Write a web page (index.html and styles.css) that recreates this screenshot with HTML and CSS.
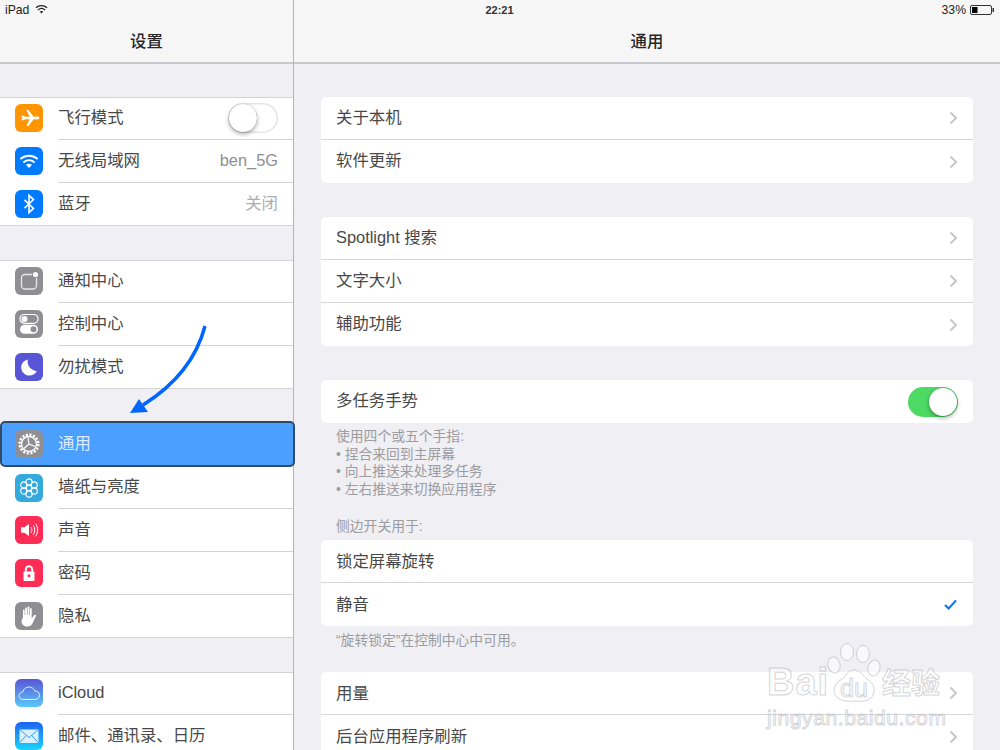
FILE: index.html
```html
<!DOCTYPE html>
<html lang="zh">
<head>
<meta charset="utf-8">
<title>设置</title>
<link rel="stylesheet" href="styles.css">
</head>
<body>
<div class="screen">
  <aside class="side">
    <header class="nav"><h1 class="title">设置</h1></header>
    <section class="group">
      <div class="row">
        <span class="ic orange"><svg viewBox="0 0 28 28"><path fill="#fff" d="M6 12.200l1.200-.6 3.400 1.200 4-.1-3.200-6.700h2l5.300 6.700 3.600-.1c1.300 0 2.200.7 2.200 1.400s-.9 1.400-2.200 1.400l-3.600-.1-5.300 6.700h-2l3.200-6.700-4-.1-3.400 1.200-1.200-.6 1.700-1.800z"/></svg></span>
        <span class="label">飞行模式</span>
        <span class="toggle"><span class="knob"></span></span>
      </div>
      <div class="row">
        <span class="ic blue"><svg viewBox="0 0 28 28"><g fill="none" stroke="#fff" stroke-width="2" stroke-linecap="round"><path d="M6 11.500c4.500-3.800 11.500-3.800 16 0"/><path d="M9 15c2.900-2.400 7.100-2.400 10 0"/></g><path fill="#fff" d="M14 21l-3-3.300c1.700-1.300 4.300-1.300 6 0z"/></svg></span>
        <span class="label">无线局域网</span>
        <span class="value">ben_5G</span>
      </div>
      <div class="row">
        <span class="ic blue"><svg viewBox="0 0 28 28"><path fill="none" stroke="#fff" stroke-width="1.600" d="M9.500 9.800l9 8.600-4.500 4.200V5.400l4.500 4.200-9 8.600"/></svg></span>
        <span class="label">蓝牙</span>
        <span class="value pale">关闭</span>
      </div>
    </section>
    <section class="group">
      <div class="row">
        <span class="ic gray"><svg viewBox="0 0 28 28"><rect x="6.500" y="7.500" width="15" height="14.500" rx="3.500" fill="none" stroke="#e9e9ec" stroke-width="1.300"/><circle cx="20.500" cy="7.500" r="3.400" fill="#8e8e93"/><circle cx="20.500" cy="7.500" r="2.600" fill="#fff"/></svg></span>
        <span class="label">通知中心</span>
      </div>
      <div class="row">
        <span class="ic gray"><svg viewBox="0 0 28 28"><rect x="5" y="4.500" width="18" height="8.800" rx="4.400" fill="#8e8e93" stroke="#fff" stroke-width="1.200"/><circle cx="9.500" cy="8.900" r="3" fill="#fff"/><rect x="5" y="14.800" width="18" height="9" rx="4.500" fill="#fff"/><circle cx="18.500" cy="19.300" r="3" fill="#8e8e93"/></svg></span>
        <span class="label">控制中心</span>
      </div>
      <div class="row">
        <span class="ic indigo"><svg viewBox="0 0 28 28"><path fill="#fff" d="M12.800 6.500c-1 5.200 1.800 10.300 9 11.800-1.400 2.600-4.100 4.200-7.300 4.200-4.600 0-8.300-3.700-8.300-8.300 0-3.500 2.600-6.700 6.600-7.700z"/></svg></span>
        <span class="label">勿扰模式</span>
      </div>
    </section>
    <section class="selected-wrap">
      <div class="row selected">
        <span class="ic gray"><svg viewBox="0 0 28 28"><circle cx="14" cy="14" r="9.400" fill="none" stroke="#fff" stroke-width="2.400" stroke-dasharray="2.200 1.500"/><circle cx="14" cy="14" r="7.500" fill="none" stroke="#fff" stroke-width="1.300"/><path fill="none" stroke="#fff" stroke-width="1.200" d="M14 14l-1-6.500M14 14l6 2.500M14 14l-5 4.500"/></svg></span>
        <span class="label">通用</span>
      </div>
      <div class="row">
        <span class="ic sky"><svg viewBox="0 0 28 28"><g fill="none" stroke="#fff" stroke-width="1.100"><circle cx="14" cy="14" r="2.900"/><circle cx="14" cy="8" r="3.100"/><circle cx="14" cy="20" r="3.100"/><circle cx="8.800" cy="11" r="3.100"/><circle cx="19.200" cy="11" r="3.100"/><circle cx="8.800" cy="17" r="3.100"/><circle cx="19.200" cy="17" r="3.100"/></g></svg></span>
        <span class="label">墙纸与亮度</span>
      </div>
      <div class="row">
        <span class="ic pink"><svg viewBox="0 0 28 28"><path fill="#fff" d="M6 11.300h3.400l4.600-3.400v12.200l-4.600-3.400H6z"/><g fill="none" stroke="#fff" stroke-width="1"><path d="M16 11.200c1.200 1.800 1.200 3.800 0 5.600"/><path d="M18.300 9.300c2 3 2 6.400 0 9.400"/><path d="M20.600 7.700c2.600 4 2.600 8.600 0 12.600"/></g></svg></span>
        <span class="label">声音</span>
      </div>
      <div class="row">
        <span class="ic pink"><svg viewBox="0 0 28 28"><path fill="none" stroke="#fff" stroke-width="1.900" d="M10.800 13V10.500a3.200 3.200 0 0 1 6.400 0V13"/><rect x="8.500" y="12.500" width="11" height="9.500" rx="1" fill="#fff"/><circle cx="14" cy="16.800" r="1.500" fill="#ff2d55"/></svg></span>
        <span class="label">密码</span>
      </div>
      <div class="row">
        <span class="ic gray"><svg viewBox="0 0 28 28"><path fill="#fff" d="M8 15V8.500c0-1.300 1.700-1.300 1.700 0V13h.5V6.500c0-1.300 1.800-1.300 1.800 0V13h.6V5.500c0-1.300 1.800-1.300 1.800 0V13h.6V7c0-1.300 1.700-1.300 1.700 0v9.500l2.400-3.300c1-1.200 2.500-.2 1.800 1l-3.500 7.300c-.9 1.900-2.500 3-4.600 3h-.9c-3.200 0-5.400-2.400-5.400-5.500z"/></svg></span>
        <span class="label">隐私</span>
      </div>
    </section>
    <section class="group">
      <div class="row">
        <span class="ic cloud"><svg viewBox="0 0 28 28"><path fill="none" stroke="#fff" stroke-width="1" opacity=".85" d="M8.300 20.500c-2.500 0-4.300-1.700-4.300-3.800s1.600-3.600 3.700-3.700c.7-3 3.200-5 6.200-5 2.800 0 5 1.700 5.900 4.100 2.600-.3 4.700 1.700 4.700 4.200s-2 4.200-4.500 4.200z"/></svg></span>
        <span class="label latin">iCloud</span>
      </div>
      <div class="row">
        <span class="ic mail"><svg viewBox="0 0 28 28"><rect x="4.500" y="7.500" width="19" height="13.500" fill="#d9f0ff"/><path fill="none" stroke="#3f9cff" stroke-width="1" d="M4.500 7.500l9.500 8 9.500-8M4.500 21l7-7.800M23.500 21l-7-7.800"/></svg></span>
        <span class="label">邮件、通讯录、日历</span>
      </div>
    </section>
  </aside>

  <main class="main">
    <header class="nav"><h1 class="title">通用</h1></header>
    <section class="card">
      <div class="cell"><span class="label">关于本机</span><svg class="chev" viewBox="0 0 9 14"><path d="M1.500 1.500L7 7l-5.500 5.500"/></svg></div>
      <div class="cell"><span class="label">软件更新</span><svg class="chev" viewBox="0 0 9 14"><path d="M1.500 1.500L7 7l-5.500 5.500"/></svg></div>
    </section>
    <section class="card">
      <div class="cell"><span class="label">Spotlight 搜索</span><svg class="chev" viewBox="0 0 9 14"><path d="M1.500 1.500L7 7l-5.500 5.500"/></svg></div>
      <div class="cell"><span class="label">文字大小</span><svg class="chev" viewBox="0 0 9 14"><path d="M1.500 1.500L7 7l-5.500 5.500"/></svg></div>
      <div class="cell"><span class="label">辅助功能</span><svg class="chev" viewBox="0 0 9 14"><path d="M1.500 1.500L7 7l-5.500 5.500"/></svg></div>
    </section>
    <section class="card">
      <div class="cell"><span class="label">多任务手势</span><span class="toggle on"><span class="knob"></span></span></div>
    </section>
    <div class="note gesture">
      <p>使用四个或五个手指:</p>
      <p>• 捏合来回到主屏幕</p>
      <p>• 向上推送来处理多任务</p>
      <p>• 左右推送来切换应用程序</p>
    </div>
    <div class="note switch-head"><p>侧边开关用于:</p></div>
    <section class="card tight">
      <div class="cell"><span class="label">锁定屏幕旋转</span></div>
      <div class="cell"><span class="label">静音</span><svg class="check" viewBox="0 0 14 12"><path d="M1 6.500l4 3.800L13 1.500"/></svg></div>
    </section>
    <div class="note lock-note"><p>“旋转锁定”在控制中心中可用。</p></div>
    <section class="card tight">
      <div class="cell"><span class="label">用量</span><svg class="chev" viewBox="0 0 9 14"><path d="M1.500 1.500L7 7l-5.500 5.500"/></svg></div>
      <div class="cell"><span class="label">后台应用程序刷新</span><svg class="chev" viewBox="0 0 9 14"><path d="M1.500 1.500L7 7l-5.500 5.500"/></svg></div>
    </section>
  </main>

  <div class="status">
    <div class="status-left">
      <span>iPad</span>
      <svg class="wifi" viewBox="0 0 14 10"><g fill="none" stroke="#222" stroke-width="1.300"><path d="M1 3.700c3.400-3 8.600-3 12 0"/><path d="M3.200 6c2.200-1.900 5.400-1.900 7.600 0"/></g><path d="M7 9.800L5 7.700c1.200-.9 2.800-.9 4 0z" fill="#222"/></svg>
    </div>
    <div class="clock">22:21</div>
    <div class="status-right">
      <span>33%</span>
      <svg class="battery" viewBox="0 0 24 10"><rect x=".5" y=".5" width="21" height="9" rx="1.500" fill="none" stroke="#333"/><rect x="2" y="2" width="5.500" height="6" fill="#000"/><rect x="22.500" y="3" width="1.500" height="4" fill="#333"/></svg>
    </div>
  </div>

  <svg class="arrow" viewBox="0 0 100 110"><path fill="none" stroke="#0066ff" stroke-width="3.500" d="M85 11C77 42 58 68 23 90"/><path fill="#0066ff" d="M10 98l9-14 9 13z"/></svg>

  <div class="watermark">
    <svg class="paw" viewBox="0 0 56 60"><g fill="rgba(255,255,255,.62)" stroke="rgba(170,170,175,.5)" stroke-width="1"><ellipse cx="7" cy="22" rx="6" ry="8" transform="rotate(-15 7 22)"/><ellipse cx="20" cy="9" rx="6.500" ry="8.500"/><ellipse cx="36" cy="11" rx="6.500" ry="8.500"/><ellipse cx="47" cy="25" rx="6" ry="8" transform="rotate(15 47 25)"/><path d="M27 27c6 0 8 5 13 9 6 4 9 9 6 16-2 5-8 7-18 6-9 1-17-1-20-6-3-7 1-12 7-16 5-4 6-9 12-9z"/></g></svg>
    <span class="wm-bai">Bai</span>
    <span class="wm-du">du</span>
    <span class="wm-cn">经验</span>
    <span class="wm-url">jingyan.baidu.com</span>
  </div>
</div>
</body>
</html>
```
FILE: styles.css
```css
* { box-sizing: border-box; }
html, body { margin: 0; padding: 0; }
body {
  width: 1000px;
  height: 750px;
  overflow: hidden;
  background: #efeff4;
  font-family: "Liberation Sans", "Noto Sans CJK SC", sans-serif;
  color: #484848;
}
p, h1 { margin: 0; }

.screen {
  position: relative;
  display: flex;
  width: 1000px;
  height: 750px;
  overflow: hidden;
}
.side {
  width: 294px;
  flex: none;
  border-right: 1px solid #b4b4b8;
}
.main {
  flex: 1;
  min-width: 0;
}
.nav {
  height: 64px;
  padding-top: 19px;
  background: #f6f6f6;
  border-bottom: 2px solid #c9c9cd;
}
.title {
  height: 43px;
  line-height: 44px;
  text-align: center;
  font-size: 16.4px;
  font-weight: 500;
  color: #262626;
}

/* sidebar */
.group, .selected-wrap {
  background: #fff;
}
.group {
  margin-top: 33px;
  border-top: 1px solid #d4d4d8;
  border-bottom: 1px solid #d4d4d8;
}
.group + .group { margin-top: 34px; }
.group:last-child { border-bottom: 0; }
.selected-wrap {
  margin-top: 32px;
  border-bottom: 1px solid #d4d4d8;
}
.selected-wrap + .group { margin-top: 34px; }
.row {
  position: relative;
  display: flex;
  align-items: center;
  height: 42px;
  padding: 0 15px;
  font-size: 16.4px;
}
.row:first-child { height: 41px; padding-bottom: 1px; }
.row + .row { margin-top: 1px; }
.row + .row::before {
  content: "";
  position: absolute;
  left: 58px;
  right: 0;
  top: -1px;
  height: 1px;
  background: #d4d4d8;
}
.selected-wrap .row:nth-child(2) { margin-top: 0; height: 41px; }
.selected-wrap .row:nth-child(2)::before { display: none; }
.row.selected {
  height: 46px;
  width: 295px;
  z-index: 2;
  background: #4a9fff;
  border: 2px solid #2f4b68;
  border-radius: 5px;
  padding: 0 13px;
  color: #dcebff;
}
.ic {
  flex: none;
  width: 28px;
  height: 28px;
  margin-right: 15px;
  border-radius: 6px;
  overflow: hidden;
}
.ic svg { display: block; width: 28px; height: 28px; }
.orange { background: #ff9500; }
.blue { background: #007aff; }
.gray { background: #8e8e93; }
.indigo { background: #5856d6; }
.sky { background: #34aadc; }
.pink { background: #ff2d55; }
.cloud { background: linear-gradient(#5856d6, #5ac8fa); }
.mail { background: linear-gradient(#1d62f0, #19d5fd); }
.label { flex: 1; white-space: nowrap; padding-bottom: 5px; }
.label.latin { padding-bottom: 1px; }
.value { color: #8e8e93; padding-bottom: 2px; }
.value.pale { color: #aeaeb2; padding-bottom: 4px; }

/* switches */
.toggle {
  flex: none;
  display: flex;
  width: 50px;
  height: 30px;
  padding: 1px;
  border-radius: 15px;
  background: #fff;
  box-shadow: inset 0 0 0 1.500px #e5e5e5;
}
.knob {
  width: 28px;
  height: 28px;
  border-radius: 50%;
  background: #fff;
  box-shadow: 0 2px 4px rgba(0, 0, 0, .35), 0 0 1px rgba(0, 0, 0, .3);
}
.toggle.on {
  justify-content: flex-end;
  background: #4cd964;
  box-shadow: none;
}

/* main cards */
.card {
  margin: 34px 27px 0 27px;
  background: #fff;
  border-radius: 5px;
}
.main > .nav + .card { margin-top: 33px; }
.card.tight { margin-top: 0; }
.card.tight .label { padding-bottom: 3px; }
.cell {
  display: flex;
  align-items: center;
  height: 43px;
  padding: 0 15px;
  font-size: 16.4px;
  border-bottom: 1px solid #d6d6da;
}
.cell:last-child { border-bottom: 0; }
.chev {
  flex: none;
  width: 9px;
  height: 14px;
  fill: none;
  stroke: #c7c7cc;
  stroke-width: 2;
}
.check {
  flex: none;
  width: 13px;
  height: 11px;
  margin-right: 1px;
  fill: none;
  stroke: #007aff;
  stroke-width: 2.400;
}
.note {
  margin: 0 27px;
  padding-left: 15px;
  font-size: 13.800px;
  line-height: 17.600px;
  color: #9c9ca1;
}
.gesture { padding-top: 5px; }
.switch-head { padding-top: 20px; height: 42px; }
.lock-note { padding-top: 6px; height: 46px; }

/* status bar over the nav bars */
.status {
  position: absolute;
  left: 0;
  top: 0;
  width: 1000px;
  height: 20px;
  display: flex;
  align-items: center;
  justify-content: space-between;
  padding: 0 6px 0 5px;
  font-size: 12.200px;
  color: #222;
}
.status-left, .status-right {
  display: flex;
  align-items: center;
  gap: 4px;
  width: 120px;
}
.status-left { gap: 6px; }
.status-right { justify-content: flex-end; }
.clock { font-weight: 700; font-size: 11px; color: #333; }
.wifi { width: 13px; height: 10px; margin-bottom: 2px; }
.battery { width: 24px; height: 10px; }

/* hand-drawn annotation */
.arrow {
  position: absolute;
  left: 120px;
  top: 315px;
  width: 100px;
  height: 110px;
  z-index: 3;
}

/* watermark */
.watermark {
  position: absolute;
  left: 760px;
  top: 640px;
  width: 195px;
  height: 92px;
  z-index: 4;
  pointer-events: none;
  font-family: "Liberation Sans", "Noto Sans CJK SC", sans-serif;
  color: rgba(255, 255, 255, .55);
  -webkit-text-stroke: 1px rgba(170, 170, 175, .5);
  white-space: nowrap;
}
.paw { position: absolute; left: 67px; top: 3px; width: 56px; height: 60px; }
.wm-bai, .wm-du, .wm-cn, .wm-url { position: absolute; }
.wm-bai { left: 7px; top: 22px; font-size: 38px; line-height: 40px; font-weight: 700; letter-spacing: 1px; }
.wm-du { left: 80px; top: 35px; font-size: 25px; line-height: 26px; }
.wm-cn { left: 122px; top: 27px; font-size: 29px; line-height: 34px; font-weight: 700; }
.wm-url { left: 7px; top: 66px; font-size: 21px; line-height: 24px; letter-spacing: .6px; }
```
